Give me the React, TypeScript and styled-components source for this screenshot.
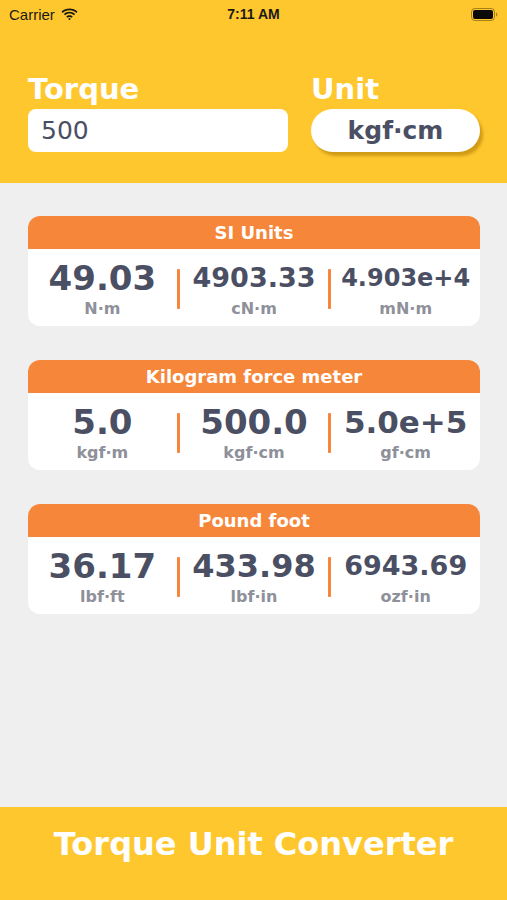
import React from "react";
import styled, { createGlobalStyle } from "styled-components";

const YELLOW = "#FFC72E";
const ORANGE = "#F6863A";
const INK = "#4B4F63";
const MUTED = "#8E909A";

const GlobalStyle = createGlobalStyle`
  html, body { margin: 0; padding: 0; }
  body {
    background: #EFEFF0;
    font-family: "DejaVu Sans", "Liberation Sans", sans-serif;
    -webkit-font-smoothing: antialiased;
  }
  * { box-sizing: border-box; }
`;

const Page = styled.div`
  width: 507px;
  height: 900px;
  display: flex;
  flex-direction: column;
  background: #efeff0;
`;

const Header = styled.header`
  background: ${YELLOW};
  height: 183px;
  display: flex;
  flex-direction: column;
`;

const StatusBar = styled.div`
  height: 28px;
  display: grid;
  grid-template-columns: 1fr auto 1fr;
  align-items: center;
  padding: 0 9px 0 9px;
  font-family: "Liberation Sans", Arial, sans-serif;
  color: #1c1a14;
`;

const StatusLeft = styled.div`
  display: flex;
  align-items: center;
  gap: 6px;
  font-size: 15px;
`;

const StatusTime = styled.div`
  font-size: 14px;
  font-weight: bold;
`;

const StatusRight = styled.div`
  display: flex;
  justify-content: flex-end;
`;

const InputRow = styled.div`
  display: grid;
  grid-template-columns: 260px 169px;
  column-gap: 23px;
  padding: 47px 27px 0 28px;
`;

const Field = styled.div`
  display: flex;
  flex-direction: column;
  gap: 5px;
`;

const FieldLabel = styled.div`
  color: #ffffff;
  font-size: 29px;
  font-weight: bold;
  line-height: 29px;
`;

const TextBox = styled.div`
  height: 43px;
  background: #ffffff;
  border-radius: 8px;
  display: flex;
  align-items: center;
  padding-left: 13px;
  font-size: 25px;
  color: ${INK};
`;

const UnitButton = styled.div`
  height: 43px;
  background: #ffffff;
  border-radius: 22px;
  display: flex;
  align-items: center;
  justify-content: center;
  font-size: 25px;
  font-weight: bold;
  color: ${INK};
  box-shadow: 3px 4px 3px rgba(170, 120, 0, 0.55);
`;

const Main = styled.main`
  flex: 1;
  display: flex;
  flex-direction: column;
  gap: 34px;
  padding: 33px 27px 0 28px;
`;

const Card = styled.section`
  background: #ffffff;
  border-radius: 12px;
  overflow: hidden;
`;

const CardTitle = styled.div`
  height: 33px;
  background: ${ORANGE};
  color: #ffffff;
  font-size: 18px;
  font-weight: bold;
  display: flex;
  align-items: center;
  justify-content: center;
`;

const CardBody = styled.div`
  height: 77px;
  display: flex;
  align-items: center;
  padding-top: 2px;
`;

const Cell = styled.div`
  flex: 1;
  display: flex;
  flex-direction: column;
  align-items: center;
  gap: 6px;
`;

const Value = styled.div<{ $size: number }>`
  height: 34px;
  line-height: 34px;
  font-size: ${(p) => p.$size}px;
  font-weight: bold;
  color: ${INK};
  white-space: nowrap;
`;

const UnitLabel = styled.div`
  line-height: 16px;
  font-size: 16px;
  font-weight: bold;
  color: ${MUTED};
`;

const Divider = styled.div`
  width: 3px;
  height: 40px;
  background: ${ORANGE};
  border-radius: 1px;
`;

const Footer = styled.footer`
  height: 93px;
  background: ${YELLOW};
  display: flex;
  justify-content: center;
  padding-top: 21px;
`;

const FooterTitle = styled.div`
  color: #ffffff;
  font-size: 32px;
  line-height: 32px;
  font-weight: bold;
`;

const WifiIcon = () => (
  <svg width="17" height="12" viewBox="0 0 17 12">
    <path d="M8.5 2.2c2.6 0 5 1 6.8 2.7l1.2-1.3C14.4 1.6 11.6.4 8.5.4S2.6 1.6.5 3.6l1.2 1.3C3.5 3.2 5.9 2.2 8.5 2.2z" fill="#1c1a14" />
    <path d="M8.5 5.6c1.7 0 3.2.6 4.4 1.7l1.2-1.3C12.6 4.6 10.6 3.8 8.5 3.8S4.4 4.6 2.9 6l1.2 1.3c1.2-1.1 2.7-1.7 4.4-1.7z" fill="#1c1a14" />
    <path d="M8.5 9c.8 0 1.5.3 2 .8l1.3-1.3c-.9-.8-2-1.3-3.3-1.3s-2.4.5-3.3 1.3L6.5 9.8c.5-.5 1.2-.8 2-.8z" fill="#1c1a14" />
    <circle cx="8.5" cy="11" r="1" fill="#1c1a14" />
  </svg>
);

const BatteryIcon = () => (
  <svg width="27" height="13" viewBox="0 0 27 13">
    <rect x="0.5" y="0.5" width="23" height="12" rx="3.5" fill="none" stroke="rgba(60,40,0,0.45)" />
    <rect x="2" y="2" width="20" height="9" rx="2" fill="#0a0a0a" />
    <path d="M25 4.5v4c.8-.3 1.4-1.1 1.4-2s-.6-1.7-1.4-2z" fill="rgba(60,40,0,0.45)" />
  </svg>
);

type Reading = { value: string; unit: string; size: number };
type Group = { title: string; items: Reading[] };

const groups: Group[] = [
  {
    title: "SI Units",
    items: [
      { value: "49.03", unit: "N·m", size: 34 },
      { value: "4903.33", unit: "cN·m", size: 27 },
      { value: "4.903e+4", unit: "mN·m", size: 24 },
    ],
  },
  {
    title: "Kilogram force meter",
    items: [
      { value: "5.0", unit: "kgf·m", size: 34 },
      { value: "500.0", unit: "kgf·cm", size: 34 },
      { value: "5.0e+5", unit: "gf·cm", size: 31 },
    ],
  },
  {
    title: "Pound foot",
    items: [
      { value: "36.17", unit: "lbf·ft", size: 34 },
      { value: "433.98", unit: "lbf·in", size: 32 },
      { value: "6943.69", unit: "ozf·in", size: 27 },
    ],
  },
];

export default function App() {
  return (
    <>
      <GlobalStyle />
      <Page>
        <Header>
          <StatusBar>
            <StatusLeft>
              <span>Carrier</span>
              <WifiIcon />
            </StatusLeft>
            <StatusTime>7:11 AM</StatusTime>
            <StatusRight>
              <BatteryIcon />
            </StatusRight>
          </StatusBar>
          <InputRow>
            <Field>
              <FieldLabel>Torque</FieldLabel>
              <TextBox>500</TextBox>
            </Field>
            <Field>
              <FieldLabel>Unit</FieldLabel>
              <UnitButton>kgf·cm</UnitButton>
            </Field>
          </InputRow>
        </Header>
        <Main>
          {groups.map((g) => (
            <Card key={g.title}>
              <CardTitle>{g.title}</CardTitle>
              <CardBody>
                {g.items.map((it, i) => (
                  <React.Fragment key={it.unit}>
                    {i > 0 && <Divider />}
                    <Cell>
                      <Value $size={it.size}>{it.value}</Value>
                      <UnitLabel>{it.unit}</UnitLabel>
                    </Cell>
                  </React.Fragment>
                ))}
              </CardBody>
            </Card>
          ))}
        </Main>
        <Footer>
          <FooterTitle>Torque Unit Converter</FooterTitle>
        </Footer>
      </Page>
    </>
  );
}
